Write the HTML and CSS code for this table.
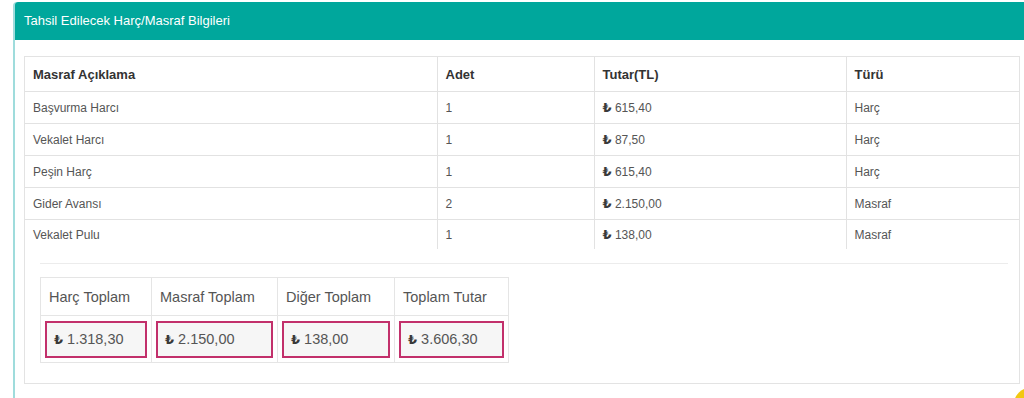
FILE: index.html
```html
<!DOCTYPE html>
<html lang="tr">
<head>
<meta charset="utf-8">
<title>Tahsil Edilecek Harç/Masraf Bilgileri</title>
<link rel="stylesheet" href="styles.css">
</head>
<body>
<div class="panel">
  <div class="panel-heading">Tahsil Edilecek Harç/Masraf Bilgileri</div>
  <div class="panel-body">
    <div class="well">
      <table class="fees">
        <colgroup>
          <col class="c1"><col class="c2"><col class="c3"><col class="c4">
        </colgroup>
        <thead>
          <tr><th>Masraf Açıklama</th><th>Adet</th><th>Tutar(TL)</th><th>Türü</th></tr>
        </thead>
        <tbody>
          <tr><td>Başvurma Harcı</td><td>1</td><td><span class="tl">₺</span> 615,40</td><td>Harç</td></tr>
          <tr><td>Vekalet Harcı</td><td>1</td><td><span class="tl">₺</span> 87,50</td><td>Harç</td></tr>
          <tr><td>Peşin Harç</td><td>1</td><td><span class="tl">₺</span> 615,40</td><td>Harç</td></tr>
          <tr><td>Gider Avansı</td><td>2</td><td><span class="tl">₺</span> 2.150,00</td><td>Masraf</td></tr>
          <tr><td>Vekalet Pulu</td><td>1</td><td><span class="tl">₺</span> 138,00</td><td>Masraf</td></tr>
        </tbody>
      </table>
      <hr class="sep">
      <table class="totals">
        <colgroup>
          <col class="t1"><col class="t2"><col class="t3"><col class="t4">
        </colgroup>
        <thead>
          <tr><th>Harç Toplam</th><th>Masraf Toplam</th><th>Diğer Toplam</th><th>Toplam Tutar</th></tr>
        </thead>
        <tbody>
          <tr>
            <td><div class="box"><span class="tl">₺</span> 1.318,30</div></td>
            <td><div class="box"><span class="tl">₺</span> 2.150,00</div></td>
            <td><div class="box"><span class="tl">₺</span> 138,00</div></td>
            <td><div class="box"><span class="tl">₺</span> 3.606,30</div></td>
          </tr>
        </tbody>
      </table>
    </div>
  </div>
</div>
<div class="fab"></div>
</body>
</html>
```

FILE: styles.css
```css
html, body {
  margin: 0;
  padding: 0;
  background: #ffffff;
  overflow: hidden;
}
body {
  font-family: "Liberation Sans", Arial, sans-serif;
  color: #555555;
  height: 398px;
  position: relative;
}
.panel {
  margin: 2px 0 0 13px;
  border-left: 2px solid #9fdcdc;
  border-top-left-radius: 4px;
  min-height: 420px;
}
.panel-heading {
  background: #00a79c;
  color: #ffffff;
  font-size: 13px;
  height: 38px;
  line-height: 38px;
  padding-left: 9px;
  border-top-left-radius: 3px;
}
.panel-body {
  padding: 16px 4px 0 9px;
}
.well {
  border: 1px solid #e3e3e3;
  padding-bottom: 20px;
}
.fees {
  width: 100%;
  border-collapse: collapse;
  table-layout: fixed;
}
.fees .c1 { width: 412px; }
.fees .c2 { width: 157px; }
.fees .c3 { width: 252px; }
.fees .c4 { width: auto; }
.fees th {
  text-align: left;
  font-size: 13px;
  font-weight: bold;
  color: #333333;
  height: 34px;
  padding: 0 8px;
}
.fees td {
  font-size: 12px;
  height: 31px;
  padding: 0 8px;
  border-top: 1px solid #e2e2e2;
}
.fees th + th, .fees td + td {
  border-left: 1px solid #e2e2e2;
}
.fees tbody tr:last-child td {
  height: 29px;
}
.tl {
  font-family: "DejaVu Sans", sans-serif;
  font-weight: bold;
  font-size: 13px;
  color: #3a3a3a;
}
.sep {
  border: 0;
  border-top: 1px solid #ececec;
  margin: 14px 11px 13px 15px;
  height: 0;
}
.totals {
  margin-left: 15px;
  border-collapse: collapse;
  border: 1px solid #e5e5e5;
  table-layout: fixed;
  width: 468px;
}
.totals .t1 { width: 111px; }
.totals .t2 { width: 126px; }
.totals .t3 { width: 117px; }
.totals .t4 { width: 114px; }
.totals th {
  font-weight: normal;
  text-align: left;
  font-size: 14.5px;
  color: #555555;
  height: 37px;
  padding: 0 8px;
  border: 1px solid #e5e5e5;
  white-space: nowrap;
}
.totals td {
  padding: 5px 4px 4px;
  border: 1px solid #e5e5e5;
  border-top: 0;
  border-bottom: 0;
}
.box {
  border: 2px solid #c2306b;
  background: #f6f6f6;
  height: 33px;
  line-height: 33px;
  padding: 0 7px;
  font-size: 14.5px;
  color: #555555;
  white-space: nowrap;
}
.box .tl {
  font-size: 13px;
}
.fab {
  position: absolute;
  right: -22px;
  bottom: -22px;
  width: 32px;
  height: 32px;
  border-radius: 50%;
  background: #f2c811;
}
```
